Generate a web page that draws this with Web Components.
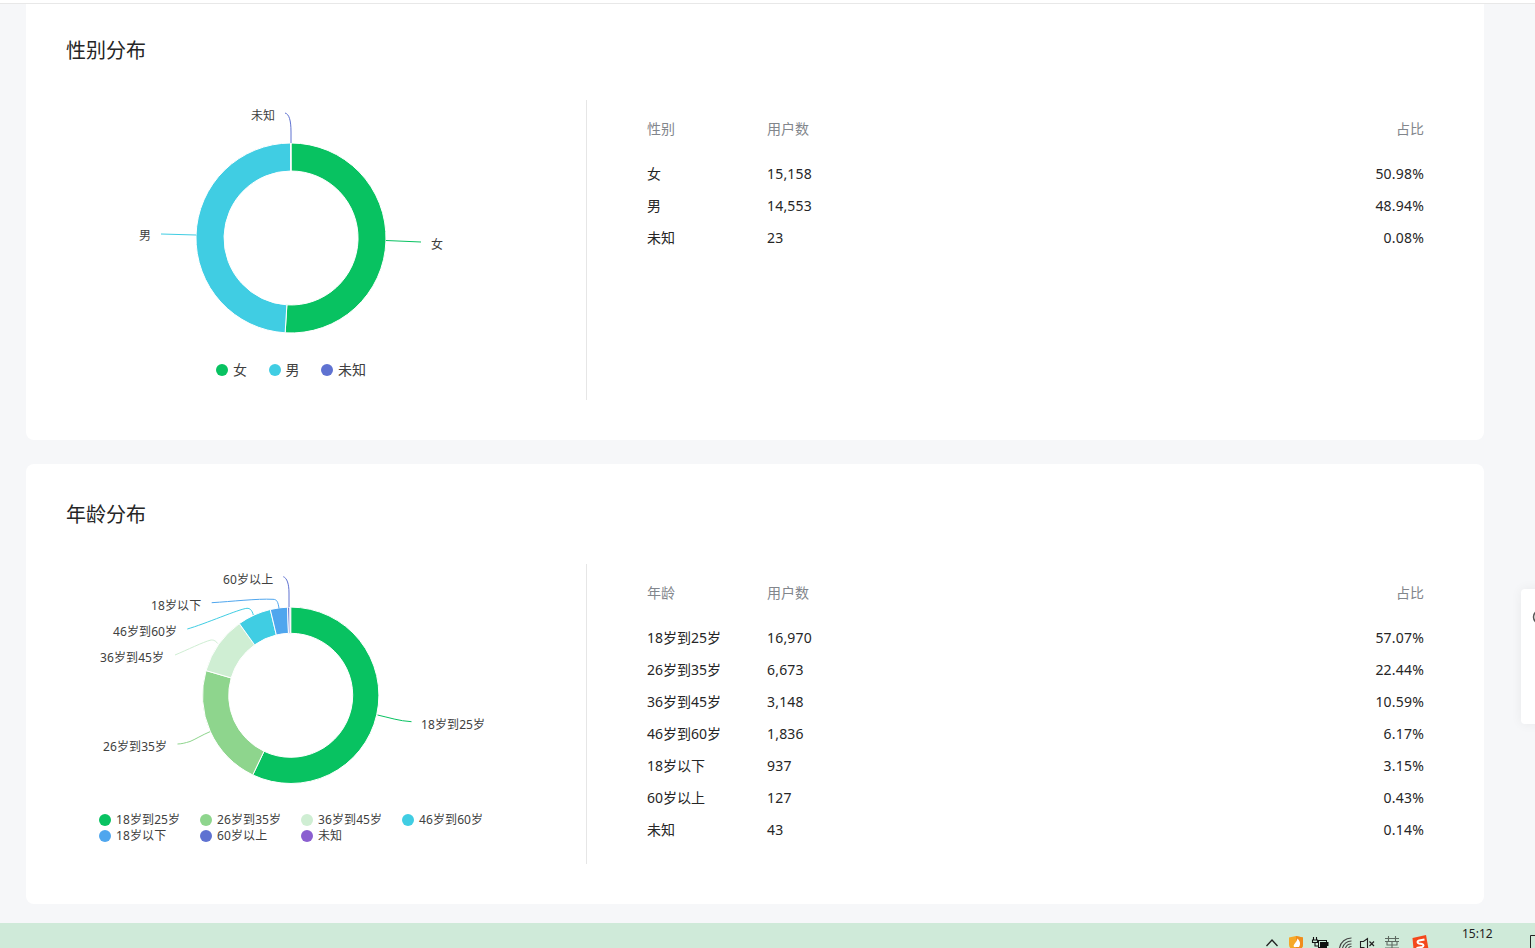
<!DOCTYPE html>
<html lang="zh"><head><meta charset="utf-8"><title>用户分布</title>
<style>
html,body{margin:0;padding:0;height:948px;overflow:hidden;background:#f6f7f9;font-family:"Noto Sans","Noto Sans CJK SC",sans-serif;color:#262626}
body{display:flex;flex-direction:column}
</style></head><body>
<top-edge></top-edge>
<page-main>
  <dist-card title="性别分布" dim="性别" chart="gender" compact></dist-card>
  <dist-card title="年龄分布" dim="年龄" chart="age"></dist-card>
</page-main>
<side-tab></side-tab>
<task-bar></task-bar>
<script>
const FONT='"Noto Sans","Noto Sans CJK SC",sans-serif';
const DATA={
 gender:{cx:224,cy:138,R:95,r:67,h:260,fs:14,
  rows:[['女','15,158','50.98%',50.98,'#08c261'],['男','14,553','48.94%',48.94,'#40cde3'],['未知','23','0.08%',0.08,'#5f72d1']],
  lines:[['M319 140.500 L354 142','#08c261'],['M129 135 L94 134','#40cde3'],['M224 43 L224 32 C224 20 222 14 218 13','#5f72d1']],
  labels:[['未知',184,15.500],['女',364,144.500],['男',72,135.500]]},
 age:{cx:223.700,cy:131.300,R:88.200,r:62,h:248,fs:12,
  rows:[['18岁到25岁','16,970','57.07%',57.07,'#08c261'],['26岁到35岁','6,673','22.44%',22.44,'#8ed58d'],['36岁到45岁','3,148','10.59%',10.59,'#cfeed3'],['46岁到60岁','1,836','6.17%',6.17,'#40cde3'],['18岁以下','937','3.15%',3.15,'#4fa6ee'],['60岁以上','127','0.43%',0.43,'#5f72d1'],['未知','43','0.14%',0.14,'#8b5fd0']],
  lines:[['M310.500 151 C322 153.500 332 157 344.500 157.700','#08c261'],['M143 167.700 C135 171 128 175.500 123 177.500 C118 179 114 180 110.500 180','#8ed58d'],['M150.700 79.500 C148 76 146 76 144 76 C136 78 120 86 108 91','#cfeed3'],['M186.300 51 C185 46 183 44.300 180 44.300 C172 45 138 60 120.300 65','#40cde3'],['M212 44.300 C211 38 210 35.300 206 35.300 C190 34.500 165 37.500 144.700 38.700','#4fa6ee'],['M222 43 L222 29 C222 20 220 14 216.300 12.700','#5f72d1']],
  labels:[['60岁以上',156,15.500],['18岁以下',84,41.500],['46岁到60岁',46,67.500],['36岁到45岁',33,93.500],['26岁到35岁',36,182.500],['18岁到25岁',354,160.500]]}
};
function arc(cx,cy,R,r,a0,a1){
 const p=(rad,a)=>[(cx+rad*Math.sin(a)).toFixed(2),(cy-rad*Math.cos(a)).toFixed(2)].join(' ');
 const lg=(a1-a0)>Math.PI?1:0;
 return `M${p(R,a0)} A${R} ${R} 0 ${lg} 1 ${p(R,a1)} L${p(r,a1)} A${r} ${r} 0 ${lg} 0 ${p(r,a0)} Z`;
}
class TopEdge extends HTMLElement{constructor(){super();this.attachShadow({mode:'open'}).innerHTML=`<style>:host{display:block;height:3px;background:#fff;border-bottom:1px solid #e8e8e8;flex:none;position:relative;z-index:1}</style>`}}
class PageMain extends HTMLElement{constructor(){super();this.attachShadow({mode:'open'}).innerHTML=`<style>:host{display:flex;flex-direction:column;gap:24px;flex:1;padding:0 51px 0 26px;min-height:0;overflow:hidden;box-sizing:border-box}</style><slot></slot>`}}
class DonutChart extends HTMLElement{
 connectedCallback(){
  const d=DATA[this.getAttribute('data-set')];
  const total=d.rows.reduce((s,x)=>s+x[3],0);let a=0;
  const segs=d.rows.map(x=>{const a0=a;a+=x[3]/total*2*Math.PI;return `<path d="${arc(d.cx,d.cy,d.R,d.r,a0,a)}" fill="${x[4]}" stroke="#fff" stroke-width="1" stroke-linejoin="round"/>`}).join('');
  const lines=d.lines.map(l=>`<path d="${l[0]}" fill="none" stroke="${l[1]}" stroke-width="1"/>`).join('');
  const labels=d.labels.map(l=>`<text x="${l[1]}" y="${l[2]}" dominant-baseline="central" font-size="12" letter-spacing=".1" fill="#404040">${l[0]}</text>`).join('');
  const legend=d.rows.map(x=>`<span class="item"><i style="background:${x[4]}"></i>${x[0]}</span>`).join('');
  this.attachShadow({mode:'open'}).innerHTML=`<style>
  :host{display:block;width:519px;height:300px;flex:none;font-family:${FONT}}
  svg{display:block;overflow:visible}
  text{font-family:${FONT}}
  .legend{width:448px;display:flex;justify-content:center;color:#404040}
  .legend.small{display:grid;grid-template-columns:repeat(4,101px);grid-auto-rows:16px;font-size:12px;line-height:16px;letter-spacing:.1px;justify-content:start;padding-left:32px;box-sizing:border-box}
  .legend.big{font-size:14px;line-height:20px;gap:21.500px}
  .item{display:flex;align-items:center;gap:5px;white-space:nowrap}
  i{width:12px;height:12px;border-radius:50%;flex:none}
  </style>
  <svg width="519" height="${d.h}" viewBox="0 0 519 ${d.h}">${segs}${lines}${labels}</svg>
  <div class="legend ${d.fs===12?'small':'big'}">${legend}</div>`;
 }
}
class DataTable extends HTMLElement{
 connectedCallback(){
  const d=DATA[this.getAttribute('data-set')];
  const rows=d.rows.map(x=>`<div class="row"><span>${x[0]}</span><span class="num">${x[1]}</span><span class="pct num">${x[2]}</span></div>`).join('');
  this.attachShadow({mode:'open'}).innerHTML=`<style>
  :host{display:block;flex:1;padding:13px 20px 0 60px;font-size:14px;color:#262626;font-family:${FONT}}
  .row{display:grid;grid-template-columns:120px 1fr 100px;height:32px;line-height:32px}
  .head{color:#82868c;font-size:14px;line-height:31px;margin-bottom:13px}
  .pct{text-align:right}
  .num{letter-spacing:.2px}
  </style>
  <div class="row head"><span>${this.getAttribute('dim')}</span><span>用户数</span><span class="pct">占比</span></div>${rows}`;
 }
}
class DistCard extends HTMLElement{
 connectedCallback(){
  const c=this.getAttribute('chart');
  const compact=this.hasAttribute('compact');
  this.attachShadow({mode:'open'}).innerHTML=`<style>
  :host{display:block;height:${compact?436:440}px;flex:none;background:#fff;border-radius:8px;box-sizing:border-box;padding:${compact?30:34}px 40px 0 41px;font-family:${FONT}}
  :host([compact]){border-radius:0 0 8px 8px}
  h2{margin:0 0 0 -1px;font-size:20px;font-weight:400;line-height:33px;color:#262626}
  .body{display:flex;margin-top:33px;height:300px}
  data-table{border-left:1px solid #e6e6e6}
  </style>
  <h2>${this.getAttribute('title')}</h2>
  <div class="body"><donut-chart data-set="${c}"></donut-chart><data-table data-set="${c}" dim="${this.getAttribute('dim')}"></data-table></div>`;
 }
}
class SideTab extends HTMLElement{constructor(){super();this.attachShadow({mode:'open'}).innerHTML=`<style>
 :host{position:absolute;left:1521px;top:589px;width:30px;height:135px;background:#fff;border-radius:4px;box-shadow:0 0 12px rgba(0,0,0,.06);display:block}
 svg{position:absolute;left:11px;top:20px}</style><svg width="16" height="16" viewBox="0 0 16 16"><circle cx="8" cy="8" r="6.500" fill="none" stroke="#555" stroke-width="1.500"/></svg>`}}
class TaskBar extends HTMLElement{constructor(){super();this.attachShadow({mode:'open'}).innerHTML=`<style>
 :host{display:block;height:25px;flex:none;background:#cfead9;position:relative;overflow:hidden;font-family:${FONT}}
 .clock{position:absolute;left:1462px;top:2px;font-size:12px;line-height:17px;color:#222}
 svg{position:absolute;left:1260px;top:0}
 </style>
 <svg width="275" height="25" viewBox="1260 923 275 25" fill="none">
  <path d="M1266.500 946l5.500-6 5.500 6" stroke="#222" stroke-width="1.300"/>
  <path d="M1289 937.500l7-1.500 7 1.500v7c0 3.500-3 5.500-7 7.500-4-2-7-4-7-7.500z" fill="#f6a828"/>
  <path d="M1296 936l7 1.500v7c0 3.500-3 5.500-7 7.500z" fill="#f08c1c"/>
  <path d="M1297.500 938.500c2.500 2.500 3.500 5.500 1.500 8.500h-5c-1.500-2.500 2.500-4 3.500-8.500z" fill="#fff"/>
  <path d="M1313.500 937v3M1316.500 937v3M1312.500 940h5v2.500h-5zM1315 942.500v3.500h3" stroke="#111" stroke-width="1.100"/>
  <rect x="1318.500" y="940.500" width="8" height="7" stroke="#111"/><rect x="1320" y="942" width="6" height="6" fill="#111"/><rect x="1327" y="942" width="1.500" height="4" fill="#111"/>
  <path d="M1339.500 948a12 12 0 0 1 12-10M1342.500 948a9 9 0 0 1 9-7M1345.500 948a6 6 0 0 1 6-4M1348.500 948a3 3 0 0 1 3-1.500" stroke="#444" stroke-width="1.100"/>
  <path d="M1360.500 941.500v6h3l4 2.500v-11.500l-4 3z" stroke="#222" stroke-width="1.100"/><path d="M1369.500 941.500l4.500 4.500M1374 941.500l-4.500 4.500" stroke="#222" stroke-width="1.200"/>
  <path d="M1385 938.500h14M1388.500 936v5M1395.500 936v5M1385 941.500h14M1387 941.500v3.500h10v-3.500M1392 941v7M1385 948h14" stroke="#5e6a62" stroke-width="1.100"/>
  <path d="M1412.500 938l13.500-3 2.500 14h-15z" fill="#f4481c"/>
  <path d="M1424.500 939.500l-5.500 1c-2 .5-2 2.500 0 3l3 .5c2 .5 2 2.500 0 3l-5.500 1" stroke="#fff" stroke-width="2"/>
  <path d="M1530.500 935.500h10v14h-10z" stroke="#222"/>
 </svg>
 <div class="clock">15:12</div>`}}
customElements.define('top-edge',TopEdge);
customElements.define('page-main',PageMain);
customElements.define('donut-chart',DonutChart);
customElements.define('data-table',DataTable);
customElements.define('dist-card',DistCard);
customElements.define('side-tab',SideTab);
customElements.define('task-bar',TaskBar);
</script>
</body></html>
